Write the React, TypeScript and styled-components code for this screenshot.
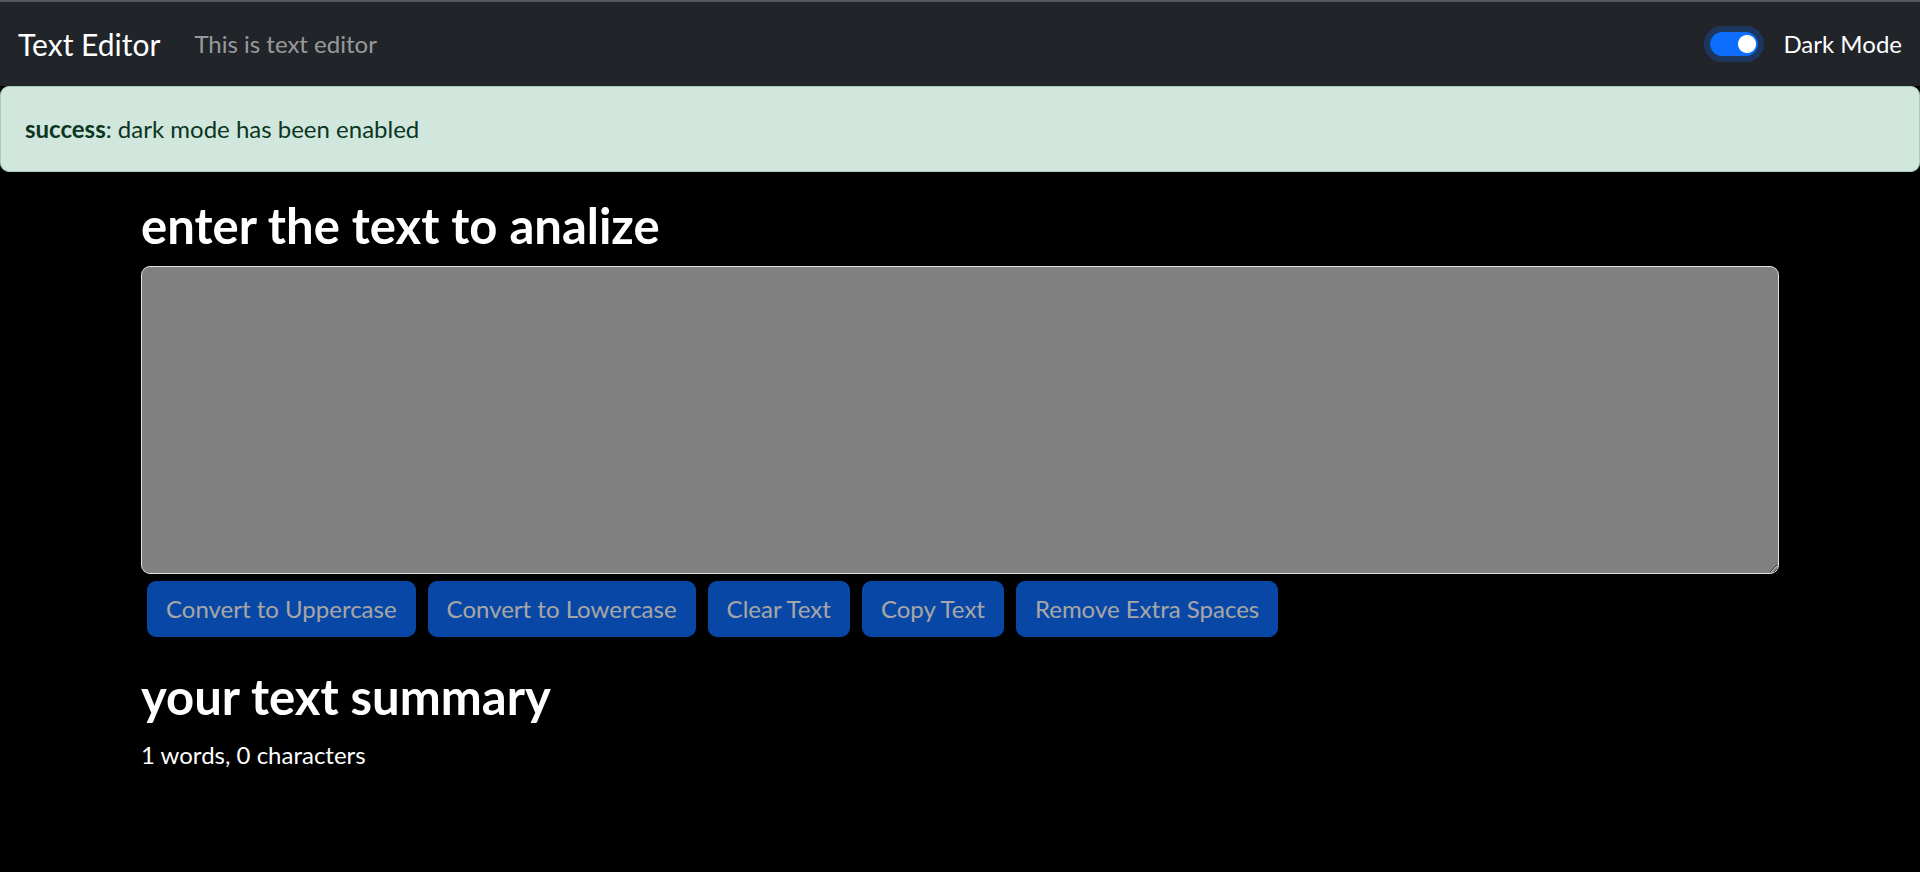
import { useState } from "react";
import styled, { createGlobalStyle } from "styled-components";

const GlobalStyle = createGlobalStyle`
  * {
    box-sizing: border-box;
  }

  body {
    margin: 0;
    background: #000000;
    color: #ffffff;
    font-family: Lato, "Liberation Sans", sans-serif;
    font-size: 24px;
    line-height: 1.5;
  }
`;

const App = () => {
  const [text, setText] = useState("");
  const [dark, setDark] = useState(true);

  const words = text.split(" ").length;

  return (
    <>
      <GlobalStyle />
      <Navbar>
        <NavLeft>
          <Brand href="#">Text Editor</Brand>
          <NavLink href="#">This is text editor</NavLink>
        </NavLeft>

        <SwitchWrap>
          <Switch
            type="checkbox"
            checked={dark}
            onChange={() => setDark(!dark)}
            id="darkSwitch"
          />
          <SwitchLabel htmlFor="darkSwitch">Dark Mode</SwitchLabel>
        </SwitchWrap>
      </Navbar>

      <Alert>
        <strong>success</strong>: dark mode has been enabled
      </Alert>

      <Container>
        <Heading>enter the text to analize</Heading>
        <TextArea
          rows={8}
          value={text}
          onChange={(e) => setText(e.target.value)}
        />

        <ButtonRow>
          <Button disabled={text.length === 0}>Convert to Uppercase</Button>
          <Button disabled={text.length === 0}>Convert to Lowercase</Button>
          <Button disabled={text.length === 0}>Clear Text</Button>
          <Button disabled={text.length === 0}>Copy Text</Button>
          <Button disabled={text.length === 0}>Remove Extra Spaces</Button>
        </ButtonRow>
      </Container>

      <Summary>
        <Heading>your text summary</Heading>
        <Count>
          {words} words, {text.length} characters
        </Count>
      </Summary>
    </>
  );
};

const Navbar = styled.nav`
  height: 86px;
  display: flex;
  align-items: center;
  justify-content: space-between;
  padding: 0 18px;
  background: #212529;
  border-top: 2px solid #55585c;
`;

const NavLeft = styled.div`
  display: flex;
  align-items: center;
`;

const Brand = styled.a`
  font-size: 30px;
  line-height: 45px;
  color: #ffffff;
  text-decoration: none;
  margin-right: 22px;
`;

const NavLink = styled.a`
  padding: 0 12px;
  font-size: 24px;
  color: rgba(255, 255, 255, 0.55);
  text-decoration: none;
`;

const SwitchWrap = styled.div`
  display: flex;
  align-items: center;
  gap: 25px;
`;

const Switch = styled.input`
  appearance: none;
  margin: 0;
  width: 48px;
  height: 24px;
  border-radius: 24px;
  border: 1px solid #0d6efd;
  background-color: #0d6efd;
  background-image: radial-gradient(circle at 36px 50%, #ffffff 8.5px, transparent 9.5px);
  box-shadow: 0 0 0 6px rgba(13, 110, 253, 0.25);
  cursor: pointer;
`;

const SwitchLabel = styled.label`
  font-size: 24px;
  color: #ffffff;
`;

const Alert = styled.div`
  padding: 24px;
  background: #d1e7dd;
  border: 1px solid #a3cfbb;
  border-radius: 9px;
  color: #0a3622;
  font-size: 24px;
  line-height: 36px;

  strong {
    font-weight: 700;
  }
`;

const Container = styled.div`
  width: 1638px;
  margin: 0 auto;
  padding-top: 24px;
`;

const Heading = styled.h1`
  margin: 0 0 12px;
  font-size: 49px;
  font-weight: 700;
  line-height: 58px;
  color: #ffffff;
`;

const TextArea = styled.textarea`
  display: block;
  width: 100%;
  padding: 9px 18px;
  font-family: inherit;
  font-size: 24px;
  line-height: 36px;
  color: #ffffff;
  background: grey;
  border: 1px solid #dee2e6;
  border-radius: 9px;
  outline: none;
`;

const ButtonRow = styled.div`
  display: flex;
  gap: 12px;
  padding: 7px 6px 0;
`;

const Button = styled.button`
  padding: 9px 18px;
  font-family: inherit;
  font-size: 24px;
  line-height: 36px;
  color: #ffffff;
  background: #0d6efd;
  border: 1px solid #0d6efd;
  border-radius: 9px;

  &:disabled {
    opacity: 0.65;
  }
`;

const Summary = styled.div`
  width: 1638px;
  margin: 0 auto;
  padding-top: 30px;
`;

const Count = styled.p`
  margin: 0;
  font-size: 24px;
  line-height: 36px;
`;

export default App;
